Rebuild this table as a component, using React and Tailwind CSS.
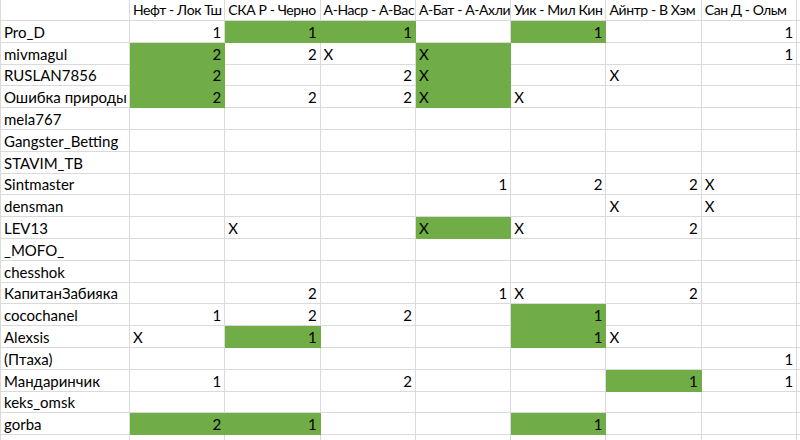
import React from 'react';

const columns = [
  'Нефт - Лок Тш',
  'СКА Р - Черно',
  'А-Наср - А-Вас',
  'А-Бат - А-Ахли',
  'Уик - Мил Кин',
  'Айнтр - В Хэм',
  'Сан Д - Ольм',
];

// each cell: value ('' | number | 'X'), trailing g = green fill
const rows = [
  ['Pro_D', ['1', '1g', '1g', '', '1g', '', '1']],
  ['mivmagul', ['2g', '2', 'X', 'Xg', '', '', '1']],
  ['RUSLAN7856', ['2g', '', '2', 'Xg', '', 'X', '']],
  ['Ошибка природы', ['2g', '2', '2', 'Xg', 'X', '', '']],
  ['mela767', []],
  ['Gangster_Betting', []],
  ['STAVIM_TB', []],
  ['Sintmaster', ['', '', '', '1', '2', '2', 'X']],
  ['densman', ['', '', '', '', '', 'X', 'X']],
  ['LEV13', ['', 'X', '', 'Xg', 'X', '2', '']],
  ['_MOFO_', []],
  ['chesshok', []],
  ['КапитанЗабияка', ['', '2', '', '1', 'X', '2', '']],
  ['cocochanel', ['1', '2', '2', '', '1g', '', '']],
  ['Alexsis', ['X', '1g', '', '', '1g', 'X', '']],
  ['(Птаха)', ['', '', '', '', '', '', '1']],
  ['Мандаринчик', ['1', '', '2', '', '', '1g', '1']],
  ['keks_omsk', []],
  ['gorba', ['2g', '1g', '', '', '1g', '', '']],
  ['', []],
];

const Cell = ({ raw = '' }) => {
  const green = raw.endsWith('g');
  const val = green ? raw.slice(0, -1) : raw;
  const isText = val === 'X';
  return (
    <div
      className={`w-[95.3px] shrink-0 h-full flex items-end pb-px px-[3px] border-r border-b ${
        green ? 'bg-[#70ad47] border-[#70ad47]' : 'border-[#dadada]'
      } ${isText ? 'justify-start' : 'justify-end'}`}
    >
      {val}
    </div>
  );
};

export default function App() {
  return (
    <div className="w-[800px] h-[440px] overflow-hidden bg-white text-black text-[15px] leading-[18px] font-['Lato',sans-serif]">
      {/* header */}
      <div className="flex h-[21px]">
        <div className="w-[130px] shrink-0 h-full border-l border-r border-b border-[#dadada]" />
        {columns.map((c) => (
          <div
            key={c}
            className="w-[95.3px] shrink-0 h-full flex items-end pb-px px-[3px] border-r border-b border-[#dadada] whitespace-nowrap text-[14px] tracking-[-0.4px]"
          >
            {c}
          </div>
        ))}
        <div className="flex-1 border-b border-[#dadada]" />
      </div>

      {rows.map(([name, cells], i) => (
        <div key={i} className="flex h-[21.8px]">
          <div className="w-[130px] shrink-0 h-full flex items-end pb-px px-[3px] border-l border-r border-b border-[#dadada] whitespace-nowrap">
            {name}
          </div>
          {columns.map((_, j) => (
            <Cell key={j} raw={cells[j]} />
          ))}
          <div className="flex-1 border-b border-[#dadada]" />
        </div>
      ))}
    </div>
  );
}
